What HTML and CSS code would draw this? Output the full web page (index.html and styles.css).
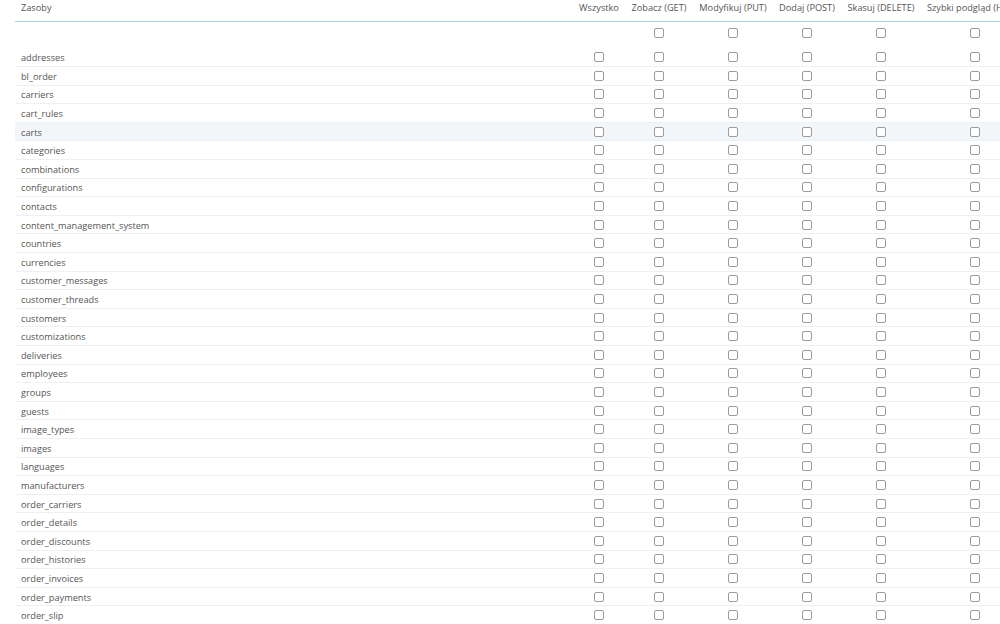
FILE: index.html
```html
<!DOCTYPE html>
<html lang="pl">
<head>
  <meta charset="UTF-8">
  <meta name="viewport" content="width=device-width, initial-scale=1.0">
  <title>Uprawnienia webservice</title>
  <link rel="stylesheet" href="styles.css">
</head>
<body>
  <table class="permissions">
    <colgroup>
      <col class="col-name">
      <col class="col-all">
      <col class="col-method">
      <col class="col-method">
      <col class="col-method">
      <col class="col-method">
      <col class="col-head">
    </colgroup>
    <thead>
      <tr>
        <th class="name">Zasoby</th>
        <th>Wszystko</th>
        <th>Zobacz (GET)</th>
        <th>Modyfikuj (PUT)</th>
        <th>Dodaj (POST)</th>
        <th>Skasuj (DELETE)</th>
        <th>Szybki podgląd (HEAD)</th>
      </tr>
    </thead>
    <tbody>
      <tr class="all-row">
        <td></td>
        <td></td>
        <td><input type="checkbox"></td>
        <td><input type="checkbox"></td>
        <td><input type="checkbox"></td>
        <td><input type="checkbox"></td>
        <td><input type="checkbox"></td>
      </tr>
    </tbody>
    <tbody id="resources"></tbody>
  </table>

  <script>
    const resources = [
      'addresses', 'bl_order', 'carriers', 'cart_rules', 'carts', 'categories',
      'combinations', 'configurations', 'contacts', 'content_management_system',
      'countries', 'currencies', 'customer_messages', 'customer_threads',
      'customers', 'customizations', 'deliveries', 'employees', 'groups',
      'guests', 'image_types', 'images', 'languages', 'manufacturers',
      'order_carriers', 'order_details', 'order_discounts', 'order_histories',
      'order_invoices', 'order_payments', 'order_slip'
    ];

    const body = document.getElementById('resources');

    resources.forEach(name => {
      const row = document.createElement('tr');
      if (name === 'carts') row.classList.add('hover');

      const label = document.createElement('td');
      label.className = 'name';
      label.textContent = name;
      row.appendChild(label);

      // one box for "all" + five methods
      for (let i = 0; i < 6; i++) {
        const cell = document.createElement('td');
        const box = document.createElement('input');
        box.type = 'checkbox';
        cell.appendChild(box);
        row.appendChild(cell);
      }
      body.appendChild(row);
    });
  </script>
</body>
</html>
```

FILE: styles.css
```css
html, body {
  margin: 0;
  overflow: hidden;
  background: #fff;
}

body {
  font-family: "Open Sans", "DejaVu Sans", sans-serif;
  font-size: 9.2px;
  line-height: 12px;
  color: #555;
}

.permissions {
  margin-left: 15px;
  width: 1017px;
  table-layout: fixed;
  border-collapse: separate;
  border-spacing: 0;
}

.col-name { width: 561px; }
.col-all { width: 46px; }
.col-method { width: 74px; }
.col-head { width: 114px; }

th {
  font-weight: normal;
  text-align: center;
  white-space: nowrap;
  padding: 2px 0 7px;
  border-bottom: 1px solid #a6d3ec;
}

th.name {
  text-align: left;
  padding-left: 6px;
}

td {
  padding: 0;
  height: 17.6px;
  vertical-align: middle;
  border-bottom: 1px solid #eef0f1;
  white-space: nowrap;
}

td.name {
  padding: 2px 0 0 6px;
  height: 15.6px;
}

.all-row td {
  height: 20.5px;
  padding-top: 6px;
  vertical-align: top;
  border-bottom: none;
}

tr.hover td {
  background: #f2f6f9;
}

input[type="checkbox"] {
  -webkit-appearance: none;
  appearance: none;
  display: block;
  box-sizing: border-box;
  width: 10px;
  height: 10px;
  margin: 0 auto;
  border: 1px solid #9c9c9c;
  border-radius: 2px;
  background: #fff;
}
```
